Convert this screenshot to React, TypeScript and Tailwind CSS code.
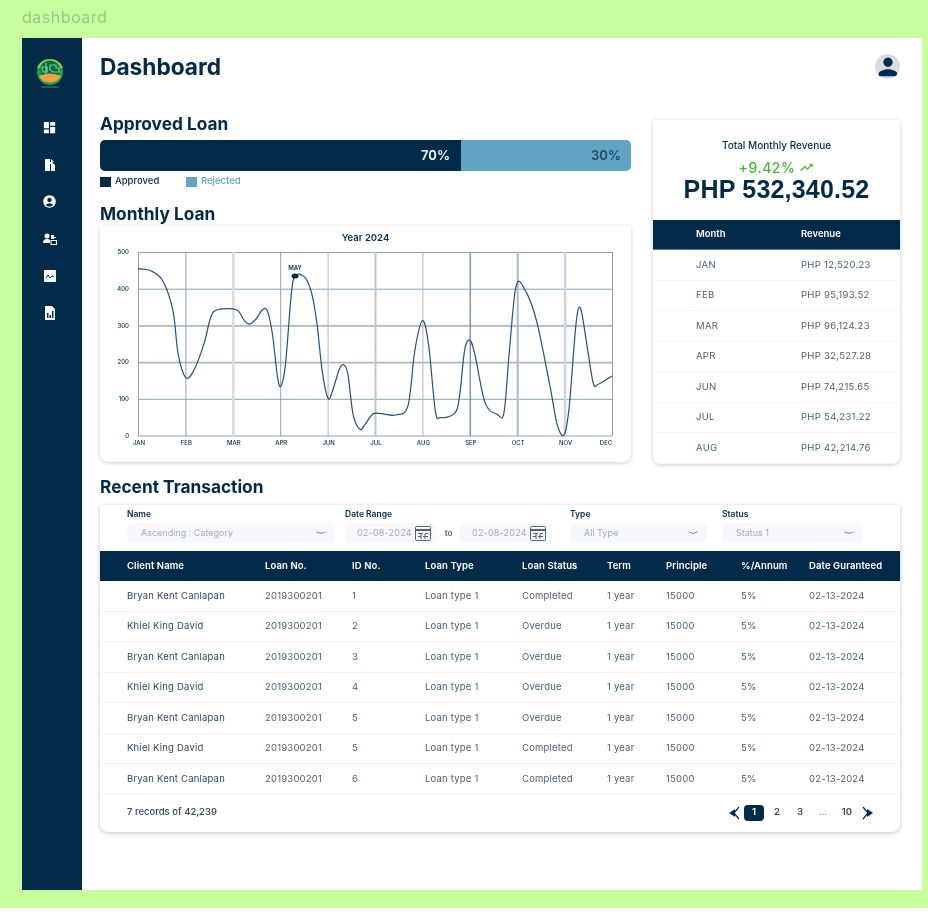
import type { ReactNode } from "react";
import { MdDashboard, MdAccountCircle, MdPerson, MdTrendingUp } from "react-icons/md";

const curvePoints: [number, number][] = [
  [138, 144], [175, 150], [210, 180], [240, 270], [255, 400], [277, 470], [300, 450], [330, 370],
  [350, 290], [370, 267], [425, 267], [445, 295], [462, 310], [482, 295], [500, 268], [515, 270],
  [530, 340], [545, 470], [555, 495], [568, 430], [585, 220], [597, 165], [625, 170], [645, 220],
  [660, 310], [675, 450], [692, 532], [705, 510], [725, 445], [738, 432], [750, 460], [765, 580],
  [785, 625], [800, 610], [825, 578], [860, 580], [890, 582], [925, 555], [945, 390], [967, 300],
  [985, 370], [1005, 570], [1020, 590], [1060, 578], [1075, 530], [1090, 390], [1105, 358], [1120, 400],
  [1150, 545], [1185, 580], [1205, 575], [1220, 400], [1240, 198], [1265, 205], [1300, 300], [1340, 500],
  [1360, 610], [1380, 642], [1395, 560], [1415, 310], [1428, 262], [1445, 360], [1465, 485], [1480, 490],
  [1520, 465],
];

// catmull-rom through the traced points
function smoothPath(pts: [number, number][]) {
  const sx = (x: number) => ((x - 138) / 1382) * 474;
  const sy = (y: number) => ((y - 94) / 551) * 184;
  const p = pts.map(([x, y]) => [sx(x), sy(y)]);
  let d = `M${p[0][0]} ${p[0][1]}`;
  for (let i = 0; i < p.length - 1; i++) {
    const a = p[Math.max(i - 1, 0)];
    const b = p[i];
    const c = p[i + 1];
    const e = p[Math.min(i + 2, p.length - 1)];
    d += ` C${b[0] + (c[0] - a[0]) / 6} ${b[1] + (c[1] - a[1]) / 6} ${c[0] - (e[0] - b[0]) / 6} ${c[1] - (e[1] - b[1]) / 6} ${c[0]} ${c[1]}`;
  }
  return d;
}

const months = ["JAN", "FEB", "MAR", "APR", "JUN", "JUL", "AUG", "SEP", "OCT", "NOV", "DEC"];
const yLabels = ["500", "400", "300", "200", "100", "0"];
const verticals: [number, string][] = [
  [1, "#8fa3b5"], [1, "#8fa3b5"], [2.5, "#d5dde4"], [1, "#8fa3b5"], [1, "#a9b9c7"], [2, "#b8c6d2"],
  [1, "#a9b9c7"], [1.5, "#7f95a9"], [2, "#a9b9c7"], [2.5, "#ccd6de"], [1, "#8fa3b5"],
];

const revenue = [
  ["JAN", "PHP 12,520.23"],
  ["FEB", "PHP 95,193.52"],
  ["MAR", "PHP 96,124.23"],
  ["APR", "PHP 32,527.28"],
  ["JUN", "PHP 74,215.65"],
  ["JUL", "PHP 54,231.22"],
  ["AUG", "PHP 42,214.76"],
];

const columns = ["Client Name", "Loan No.", "ID No.", "Loan Type", "Loan Status", "Term", "Principle", "%/Annum", "Date Guranteed"];

const rows = [
  ["Bryan Kent Canlapan", "1", "Completed"],
  ["Khiel King David", "2", "Overdue"],
  ["Bryan Kent Canlapan", "3", "Overdue"],
  ["Khiel King David", "4", "Overdue"],
  ["Bryan Kent Canlapan", "5", "Overdue"],
  ["Khiel King David", "5", "Completed"],
  ["Bryan Kent Canlapan", "6", "Completed"],
];

const gridCols = "grid grid-cols-[138px_87px_73px_97px_85px_59px_75px_68px_1fr] pl-[27px] items-center";

function Logo() {
  return (
    <svg width="30" height="30" viewBox="0 0 30 30">
      <circle cx="15" cy="14" r="13" fill="#1f9d4d" />
      <path d="M3 10a13 13 0 0 1 24 0" fill="none" stroke="#9cc93c" strokeWidth="2" />
      <circle cx="15" cy="12" r="9.500" fill="#0f6b45" />
      <path d="M7 9h5v5H8zM15 7h6v3h3v4h-6l-3-2zM11 5v11" fill="none" stroke="#5fd58a" strokeWidth="1.200" />
      <path d="M4 18q11-5 22 0a12 11 0 0 1-22 0z" fill="#eea13f" />
      <path d="M6 29h18" stroke="#5b7f8f" strokeWidth="1" />
    </svg>
  );
}

function DocIcon() {
  return (
    <svg width="14" height="14" viewBox="0 0 14 14" fill="#fff">
      <path d="M2 1h5v3h2l3 3v6H2z" />
      <path d="M8 1l3 3H8z" />
      <path d="M7 6h1v7H7z" fill="#022b4a" />
    </svg>
  );
}

function PeopleIcon() {
  return (
    <svg width="15" height="14" viewBox="0 0 15 14" fill="#fff">
      <circle cx="5" cy="4" r="2.500" />
      <path d="M1 11c0-3 1.500-4 4-4s3 1 3 1v3z" />
      <path d="M9 3h3v2h2v1h-2v1H9z" />
      <rect x="9" y="8.500" width="5.500" height="4" fill="none" stroke="#fff" />
    </svg>
  );
}

function WaveIcon() {
  return (
    <svg width="14" height="14" viewBox="0 0 14 14">
      <rect x="1" y="1" width="12" height="12" rx="1" fill="#fff" />
      <path d="M3 9l2-3 2 3 2-2 2 1" fill="none" stroke="#022b4a" strokeWidth="1" />
    </svg>
  );
}

function BarsIcon() {
  return (
    <svg width="14" height="14" viewBox="0 0 14 14" fill="#fff">
      <path d="M2 0h7l3 3v11H2z" />
      <path d="M4 7h1.500v5H4zM6.500 9H8v3H6.500zM9 5h1.500v7H9z" fill="#022b4a" />
    </svg>
  );
}

function Chevron() {
  return (
    <svg width="12" height="6" viewBox="0 0 12 6" fill="none" stroke="#7d8b99" strokeWidth="1">
      <path d="M1.500 2q4.500 3 9 0" />
    </svg>
  );
}

function CalendarIcon() {
  return (
    <svg width="16" height="15" viewBox="0 0 16 15" fill="none" stroke="#4f6478" strokeWidth="1">
      <rect x="0.500" y="0.500" width="15" height="14" rx="1" />
      <path d="M0.500 4h15" strokeWidth="2" />
      <path d="M3 7.500h5M10 7.500h3M3 10.500h3M8 10.500h5M6 8v5M10 8v5" />
    </svg>
  );
}

function PageArrow({ flip }: { flip?: boolean }) {
  return (
    <svg width="12" height="14" viewBox="0 0 12 14" className={flip ? "-scale-x-100" : ""}>
      <path d="M0 7l6-4v8z" fill="#022b4a" />
      <path d="M10 1L5 7l5 6" fill="none" stroke="#022b4a" strokeWidth="1.200" />
    </svg>
  );
}

function Heading({ children }: { children: ReactNode }) {
  return <h2 className="text-[17.300px] leading-[22px] font-bold text-[#022b4a]">{children}</h2>;
}

function MonthlyChart() {
  return (
    <div className="h-[236px] mt-[1px] rounded-b-lg bg-white shadow-[0_1px_4px_rgba(0,0,0,0.2)] pt-[6px]">
      <div className="text-center text-[9.500px] leading-[12px] font-semibold text-[#022b4a]">Year 2024</div>
      <div className="flex mt-[8px]">
        <div className="w-[38px] h-[184px] relative">
          {yLabels.map((label, i) => (
            <span
              key={label}
              className="absolute right-[9px] text-[6px] leading-[8px] font-medium text-[#022b4a] -translate-y-1/2"
              style={{ top: i * 36.8 }}
            >
              {label}
            </span>
          ))}
        </div>
        <svg width="476" height="186" viewBox="0 0 476 186" className="shrink-0">
          {[0, 1, 2, 3, 4, 5].map((i) => (
            <line
              key={i}
              x1="0"
              x2="474"
              y1={i * 36.7 + 0.5}
              y2={i * 36.7 + 0.5}
              stroke={i === 2 || i === 3 ? "#a9b9c7" : "#8fa3b5"}
              strokeWidth={i === 2 || i === 3 ? 1.6 : 1}
            />
          ))}
          {months.map((m, i) => (
            <line key={m} x1={i * 47.4 + 0.5} x2={i * 47.4 + 0.5} y1="0" y2="184" stroke={verticals[i][1]} strokeWidth={verticals[i][0]} />
          ))}
          <path d={smoothPath(curvePoints)} fill="none" stroke="#2a5173" strokeWidth="1.200" />
          <ellipse cx="157" cy="24" rx="3.500" ry="2.500" fill="#022b4a" />
          <text x="157" y="18" textAnchor="middle" fontSize="6" fontWeight="600" fill="#022b4a" fontFamily="Inter, sans-serif">MAY</text>
        </svg>
      </div>
      <div className="relative h-[10px] ml-[38px] mt-[1px]">
        {months.map((m, i) => (
          <span key={m} className="absolute text-[6px] leading-[8px] font-medium text-[#022b4a] -translate-x-1/2" style={{ left: i * 47.4 + (i === 10 ? -6 : 1) }}>
            {m}
          </span>
        ))}
      </div>
    </div>
  );
}

function RevenueCard() {
  return (
    <div className="w-[247px] h-[344px] mt-[7px] rounded-b-lg bg-white shadow-[0_1px_4px_rgba(0,0,0,0.2)] overflow-hidden">
      <div className="h-[100px] flex flex-col items-center pt-[19px]">
        <div className="text-[10px] leading-[12px] font-medium text-[#022b4a]">Total Monthly Revenue</div>
        <div className="mt-[9px] flex items-center gap-1 text-[14px] leading-[14px] font-medium text-[#3dbb2b] tracking-[0.5px]">
          +9.42% <MdTrendingUp size={15} />
        </div>
        <div className="text-[25px] leading-[28px] font-semibold text-[#022b4a] font-['Liberation_Sans',sans-serif] tracking-[0.2px]">
          PHP 532,340.52
        </div>
      </div>
      <div className="h-[30px] bg-[#022b4a] grid grid-cols-[105px_1fr] pl-[43px] items-center text-[9.500px] font-semibold text-white border-b border-[#5e7b93]">
        <span>Month</span>
        <span>Revenue</span>
      </div>
      {revenue.map(([m, r]) => (
        <div key={m} className="h-[30.500px] grid grid-cols-[105px_1fr] pl-[43px] items-center text-[9.500px] tracking-[0.3px] text-[#4a6176] whitespace-nowrap border-b border-[#f5f6f7]">
          <span>{m}</span>
          <span>{r}</span>
        </div>
      ))}
    </div>
  );
}

function Select({ label, value, w }: { label: string; value: string; w: string }) {
  return (
    <div className={w}>
      <div className="text-[8.500px] leading-[10px] font-semibold text-[#022b4a] h-[14px]">{label}</div>
      <div className="h-[20px] rounded-[5px] bg-[#f6f8fb] flex items-center justify-between pl-[14px] pr-[8px] text-[9px] text-[#a3adb8]">
        <span>{value}</span>
        <Chevron />
      </div>
    </div>
  );
}

function DateBox() {
  return (
    <div className="w-[92px] h-[20px] rounded-[5px] bg-[#f6f8fb] flex items-center justify-between pl-[12px] pr-[6px] text-[9px] text-[#a3adb8] tracking-[0.2px]">
      <span>02-08-2024</span>
      <CalendarIcon />
    </div>
  );
}

function TransactionTable() {
  return (
    <div className="h-[327px] mt-[7px] rounded-b-lg bg-white shadow-[0_1px_4px_rgba(0,0,0,0.25)] overflow-hidden">
      <div className="h-[46px] flex items-start pl-[27px] pt-[4px]">
        <Select label="Name" value="Ascending : Category" w="w-[208px]" />
        <div className="ml-[10px]">
          <div className="text-[8.500px] leading-[10px] font-semibold text-[#022b4a] h-[14px]">Date Range</div>
          <div className="flex items-center">
            <DateBox />
            <span className="w-[23px] text-center text-[8px] font-semibold text-[#4a6176]">to</span>
            <DateBox />
          </div>
        </div>
        <Select label="Type" value="All Type" w="w-[137px] ml-[18px]" />
        <Select label="Status" value="Status 1" w="w-[141px] ml-[15px]" />
      </div>
      <div className={`${gridCols} h-[30px] bg-[#022b4a] text-[9.500px] tracking-[0.1px] font-semibold text-white`}>
        {columns.map((c) => (
          <span key={c} className="whitespace-nowrap">{c}</span>
        ))}
      </div>
      {rows.map(([name, id, status], i) => (
        <div key={i} className={`${gridCols} h-[30.500px] text-[9.500px] tracking-[0.2px] text-[#4a6176] border-b border-[#f3f4f6]`}>
          <span className="text-[#2e4a63]">{name}</span>
          <span>2019300201</span>
          <span>{id}</span>
          <span>Loan type 1</span>
          <span>{status}</span>
          <span>1 year</span>
          <span>15000</span>
          <span>5%</span>
          <span>02-13-2024</span>
        </div>
      ))}
      <div className="h-[35px] pt-[1px] flex items-center justify-between pl-[27px] pr-[27px]">
        <span className="text-[9.500px] font-medium text-[#2e4a63]">7 records of 42,239</span>
        <div className="flex items-center text-[9.500px] font-semibold text-[#2e4a63]">
          <PageArrow />
          <span className="ml-[3px] w-[20px] h-[16px] rounded-[4px] bg-[#022b4a] text-white flex items-center justify-center">1</span>
          <span className="w-[26px] text-center">2</span>
          <span className="w-[20px] text-center">3</span>
          <span className="w-[26px] text-center font-normal text-[#8a98a6]">...</span>
          <span className="w-[22px] text-center">10</span>
          <span className="ml-[3px]">
            <PageArrow flip />
          </span>
        </div>
      </div>
    </div>
  );
}

export default function App() {
  const navIcons = [
    <MdDashboard key="a" size={15} />,
    <DocIcon key="b" />,
    <MdAccountCircle key="c" size={15} />,
    <PeopleIcon key="d" />,
    <WaveIcon key="e" />,
    <BarsIcon key="f" />,
  ];

  return (
    <div className="w-[928px] h-[914px] bg-white font-['Inter',sans-serif] overflow-hidden">
      <div className="h-[908px] bg-[#c8ff9e] flex flex-col blur-[0.6px]">
        <div className="h-[38px] pl-[22px] pt-[7px] text-[16px] leading-[20px] tracking-[0.5px] text-[#a1c48a]">dashboard</div>
        <div className="ml-[22px] w-[900px] h-[852px] bg-white flex">
          <aside className="w-[60px] bg-[#022b4a] flex flex-col items-center pt-[20px] pr-[5px] text-white">
            <Logo />
            <div className="mt-[32px] flex flex-col items-center gap-[22px]">
              {navIcons.map((icon, i) => (
                <div key={i} className="h-[15px] flex items-center">{icon}</div>
              ))}
            </div>
          </aside>
          <main className="flex-1 pl-[18px] pr-[22px]">
            <div className="h-[75px] flex justify-between items-start pt-[14px]">
              <h1 className="text-[22.700px] leading-[29px] font-bold text-[#022b4a]">Dashboard</h1>
              <div className="w-[25px] h-[25px] rounded-full bg-[#d9dde0] flex items-center justify-center overflow-hidden mt-[2px]">
                <MdPerson size={28} className="text-[#022b4a] shrink-0" />
              </div>
            </div>
            <div className="flex justify-between h-[351px]">
              <div className="w-[531px]">
                <Heading>Approved Loan</Heading>
                <div className="mt-[5px] flex h-[31px] rounded-[5px] overflow-hidden text-[13px] font-semibold">
                  <div className="w-[361px] bg-[#022b4a] text-white flex items-center justify-end pr-[11px]">70%</div>
                  <div className="flex-1 bg-[#62a4c4] text-[#1c4a6b] flex items-center justify-end pr-[10px]">30%</div>
                </div>
                <div className="mt-[5px] flex items-center h-[11px] text-[9.500px] font-medium">
                  <span className="w-[11px] h-[10px] bg-[#022b4a]" />
                  <span className="ml-[4px] w-[71px] text-[#022b4a]">Approved</span>
                  <span className="w-[11px] h-[10px] bg-[#62a4c4]" />
                  <span className="ml-[4px] text-[#62a4c4]">Rejected</span>
                </div>
                <div className="mt-[16px]">
                  <Heading>Monthly Loan</Heading>
                </div>
                <MonthlyChart />
              </div>
              <RevenueCard />
            </div>
            <div className="mt-[12px]">
              <Heading>Recent Transaction</Heading>
            </div>
            <TransactionTable />
          </main>
        </div>
      </div>
    </div>
  );
}
